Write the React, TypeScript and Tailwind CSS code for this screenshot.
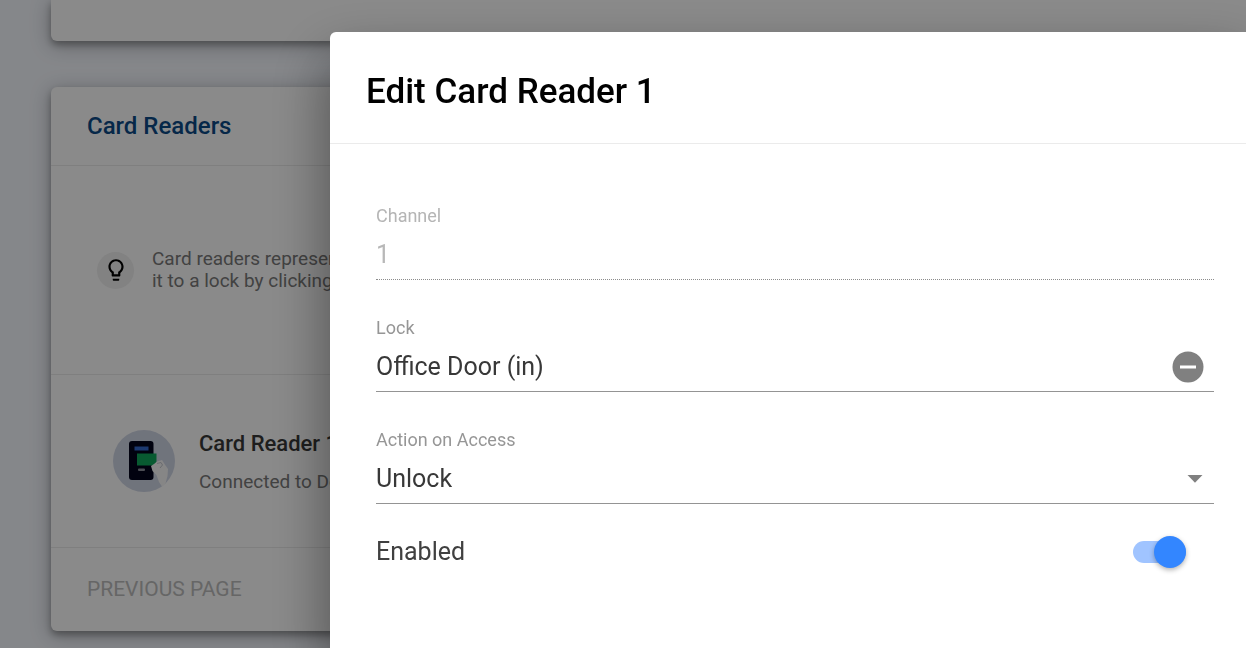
import { useState } from 'react'
import type { ReactNode } from 'react'

const cardClass =
  'bg-white shadow-[0_4px_20px_2px_rgba(0,0,0,0.22),0_4px_7px_rgba(0,0,0,0.3)]'

function ReaderIcon() {
  return (
    <svg viewBox="0 0 62 62" className="w-[62px] h-[62px] shrink-0" aria-hidden="true">
      <circle cx="31" cy="31" r="31" fill="#d0d6e6" />
      <rect x="16" y="11" width="24.5" height="39" rx="3" fill="#02051c" />
      <rect x="21.500" y="16.500" width="14" height="4" fill="#346ad0" />
      <rect x="25" y="38.500" width="7" height="2.500" rx="1" fill="#8e919e" />
      <path d="M24 23.500H43.500V35.500H24Z" fill="#0fa75c" />
      <path
        d="M38 36L41 34L44 31.500L49 30L51.500 34L55 39L54.500 46L52.500 53.500L49 56.500L46 52L43.500 45L39.500 41Z"
        fill="#f8f8f8"
      />
      <path d="M44 33.500L48 32.500L49.500 35L47 38" fill="none" stroke="#c4c6ce" strokeWidth="1" />
    </svg>
  )
}

function BulbIcon() {
  return (
    <svg viewBox="0 0 24 24" className="w-[26px] h-[26px]" fill="#000" aria-hidden="true">
      <path d="M9 21c0 .55.45 1 1 1h4c.55 0 1-.45 1-1v-1H9v1zm3-19C8.140 2 5 5.140 5 9c0 2.380 1.190 4.470 3 5.740V17c0 .55.45 1 1 1h6c.55 0 1-.45 1-1v-2.260c1.810-1.270 3-3.360 3-5.740 0-3.860-3.140-7-7-7zm2.850 11.100l-.85.6V16h-4v-2.300l-.85-.6C7.800 12.160 7 10.630 7 9c0-2.760 2.240-5 5-5s5 2.240 5 5c0 1.630-.8 3.160-2.150 4.100z" />
    </svg>
  )
}

function Field({
  id,
  label,
  disabled,
  children
}: {
  id: string
  label: string
  disabled?: boolean
  children: ReactNode
}) {
  return (
    <div className={disabled ? 'text-[#b8b8b8]' : 'text-[#383838]'}>
      <label
        htmlFor={id}
        className={`block text-lg leading-6 ${disabled ? 'text-[#b5b5b5]' : 'text-[#969696]'}`}
      >
        {label}
      </label>
      <div
        className={`relative flex items-center h-[52px] pt-0.5 border-b ${
          disabled ? 'border-dotted border-[#8c8c8c]' : 'border-[#949494]'
        }`}
      >
        {children}
      </div>
    </div>
  )
}

function EditDialog() {
  const [lock, setLock] = useState('Office Door (in)')
  const [enabled, setEnabled] = useState(true)

  return (
    <div
      role="dialog"
      aria-labelledby="dialog-title"
      className="flex-1 bg-white rounded-tl-md shadow-[0_28px_56px_4px_rgba(0,0,0,0.4)]"
    >
      <header className="flex items-center h-28 pt-2 pl-9 border-b border-[#ebebeb]">
        <h2 id="dialog-title" className="text-[35px] leading-10 font-medium text-black">
          Edit Card Reader 1
        </h2>
      </header>

      <form className="pt-[60px] pl-[46px] pr-8 flex flex-col">
        <div className="flex flex-col gap-9">
          <Field id="channel" label="Channel" disabled>
            <input id="channel" value="1" disabled className="w-full text-[25px] bg-transparent" />
          </Field>

          <Field id="lock" label="Lock">
            <input
              id="lock"
              value={lock}
              onChange={(e) => setLock(e.target.value)}
              className="flex-1 min-w-0 text-[25px] bg-transparent outline-none"
            />
            <button
              type="button"
              aria-label="Clear lock"
              onClick={() => setLock('')}
              className="mr-[10px] cursor-pointer"
            >
              <svg viewBox="0 0 32 32" className="w-8 h-8">
                <circle cx="16" cy="16" r="15.500" fill="#808080" />
                <rect x="8" y="14.500" width="16" height="3" fill="#fff" />
              </svg>
            </button>
          </Field>

          <Field id="action" label="Action on Access">
            <select
              id="action"
              className="w-full h-full text-[25px] bg-transparent appearance-none outline-none"
            >
              <option>Unlock</option>
            </select>
            <svg
              viewBox="0 0 16 8"
              className="absolute right-[11px] w-4 h-2 pointer-events-none"
              aria-hidden="true"
            >
              <path d="M0.500 0H15.500L8 7.700Z" fill="#808080" />
            </svg>
          </Field>
        </div>

        <div className="flex items-center justify-between h-10 mt-7 pr-7">
          <label htmlFor="enabled" className="text-[25px] text-[#404040]">
            Enabled
          </label>
          <label className="relative flex items-center w-[53px] h-8 cursor-pointer">
            <input
              id="enabled"
              type="checkbox"
              role="switch"
              checked={enabled}
              onChange={(e) => setEnabled(e.target.checked)}
              className="peer sr-only"
            />
            <span className="w-full h-[22px] rounded-full bg-gray-300 peer-checked:bg-[#a0c4ff]" />
            <span className="absolute left-0 w-8 h-8 rounded-full bg-white shadow-[0_2px_5px_rgba(0,0,0,0.3)] peer-checked:left-auto peer-checked:right-0 peer-checked:bg-[#3386ff]" />
          </label>
        </div>
      </form>
    </div>
  )
}

export default function App() {
  return (
    <div className="h-screen overflow-hidden bg-[#f6f9ff] font-[Roboto,sans-serif]">
      <main className="flex flex-col gap-[46px] pl-[51px]">
        <section className={`h-[41px] rounded-bl-md ${cardClass}`} />

        <section className={`rounded-l-md ${cardClass}`}>
          <header className="flex items-center h-[79px] px-9 border-b border-[#ebebeb]">
            <h1 className="text-2xl font-medium text-[#0c4a87]">Card Readers</h1>
          </header>

          <div className="flex items-center gap-[18px] h-[209px] px-[46px] border-b border-[#ebebeb]">
            <span className="flex items-center justify-center w-[37px] h-[37px] rounded-full bg-[#f0f0f0]">
              <BulbIcon />
            </span>
            <p className="text-[19px] leading-[22px] text-[#7a7a7a]">
              Card readers represent
              <br />
              it to a lock by clicking
            </p>
          </div>

          <div className="flex items-center gap-6 h-[173px] px-[62px] border-b border-[#ebebeb]">
            <ReaderIcon />
            <div className="flex flex-col gap-2 pt-1">
              <h2 className="text-[22px] leading-[30px] font-medium text-[#383838]">
                Card Reader 1
              </h2>
              <p className="text-[19px] leading-[30px] text-[#7a7a7a]">Connected to Door</p>
            </div>
          </div>

          <footer className="flex items-center h-[83px] px-9">
            <button type="button" disabled className="text-[21px] text-[#bdbdbd]">
              PREVIOUS PAGE
            </button>
          </footer>
        </section>
      </main>

      <div className="fixed inset-0 flex pt-8 pl-[330px] bg-black/46">
        <EditDialog />
      </div>
    </div>
  )
}
